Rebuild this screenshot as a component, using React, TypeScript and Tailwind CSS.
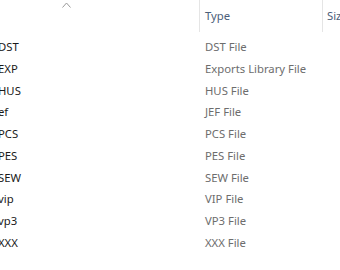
const rows = [
  { name: "DST", type: "DST File" },
  { name: "EXP", type: "Exports Library File" },
  { name: "HUS", type: "HUS File" },
  { name: "ef", type: "JEF File" },
  { name: "PCS", type: "PCS File" },
  { name: "PES", type: "PES File" },
  { name: "SEW", type: "SEW File" },
  { name: "vip", type: "VIP File" },
  { name: "vp3", type: "VP3 File" },
  { name: "XXX", type: "XXX File" },
];

export default function App() {
  return (
    <div
      className="w-[340px] h-[270px] bg-white overflow-hidden text-[11.3px]"
      style={{ fontFamily: '"Noto Sans", "Segoe UI", sans-serif' }}
    >
      {/* header */}
      <div className="flex h-[32px] mb-[5px]">
        <div className="w-[199px] shrink-0 relative">
          <svg
            className="absolute left-[62px] top-[2px]"
            width="9"
            height="6"
            viewBox="0 0 9 6"
            fill="none"
          >
            <path d="M0.5 5.5 L4.5 1 L8.5 5.5" stroke="#9a9a9a" strokeWidth="1" />
          </svg>
        </div>
        <div className="w-[123px] shrink-0 border-l border-[#e5e5e5] pl-[5px] flex items-center text-[#4c607a]">
          Type
        </div>
        <div className="w-[60px] shrink-0 border-l border-[#e5e5e5] pl-[4px] flex items-center text-[#4c607a] whitespace-nowrap">
          Size
        </div>
      </div>

      {/* rows */}
      {rows.map((r) => (
        <div key={r.type} className="flex h-[21.7px] items-center">
          <div className="w-[200px] shrink-0 overflow-hidden whitespace-nowrap text-[#1a1a1a]">
            <span className="-ml-[2px] block">{r.name}</span>
          </div>
          <div className="pl-[5px] text-[#6d6d6d] whitespace-nowrap">{r.type}</div>
        </div>
      ))}
    </div>
  );
}
